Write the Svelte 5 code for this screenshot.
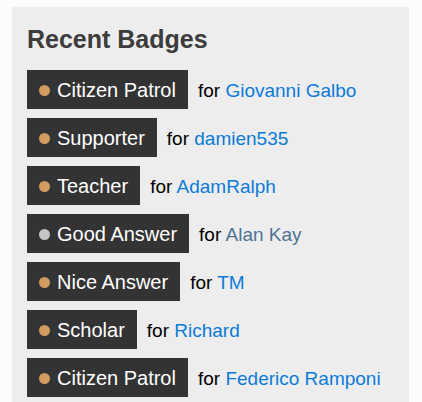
<script>
  const badges = [
    { name: 'Citizen Patrol', tier: 'bronze', user: 'Giovanni Galbo' },
    { name: 'Supporter', tier: 'bronze', user: 'damien535' },
    { name: 'Teacher', tier: 'bronze', user: 'AdamRalph' },
    { name: 'Good Answer', tier: 'silver', user: 'Alan Kay', visited: true },
    { name: 'Nice Answer', tier: 'bronze', user: 'TM' },
    { name: 'Scholar', tier: 'bronze', user: 'Richard' },
    { name: 'Citizen Patrol', tier: 'bronze', user: 'Federico Ramponi' }
  ];
</script>

<aside class="recent">
  <h2>Recent Badges</h2>
  <ul>
    {#each badges as badge}
      <li>
        <a class="badge" href="#badge"><span class="dot {badge.tier}"></span>{badge.name}</a>
        <span class="owner">for <a class="user" class:visited={badge.visited} href="#user">{badge.user}</a></span>
      </li>
    {/each}
  </ul>
</aside>

<style>
  :global(body) {
    margin: 0;
    background: #fcfcfc;
  }
  .recent {
    margin: 7px 13px 0 12px;
    padding: 16px 15px 5px;
    background: #ededed;
    color: #000;
    font: 20px/24px "Liberation Sans", Arial, sans-serif;
  }
  h2 {
    margin: 0 0 15px;
    color: #3c3c3c;
    font-size: 25px;
    line-height: 32px;
    font-weight: bold;
  }
  ul {
    display: flex;
    flex-direction: column;
    gap: 9px;
    margin: 0;
    padding: 0;
    list-style: none;
  }
  li {
    display: flex;
    align-items: center;
    gap: 10px;
    white-space: nowrap;
  }
  a {
    text-decoration: none;
  }
  .badge {
    display: flex;
    align-items: center;
    padding: 8px 12px 7px;
    background: #333;
    color: #fff;
  }
  .dot {
    width: 11px;
    height: 11px;
    margin-right: 7px;
    border-radius: 50%;
  }
  .bronze {
    background: #d29b62;
  }
  .silver {
    background: #c5c5c5;
  }
  .owner {
    padding-top: 2px;
    font-size: 19px;
  }
  .user {
    color: #0c7bd8;
  }
  .visited {
    color: #4f7394;
  }
</style>
